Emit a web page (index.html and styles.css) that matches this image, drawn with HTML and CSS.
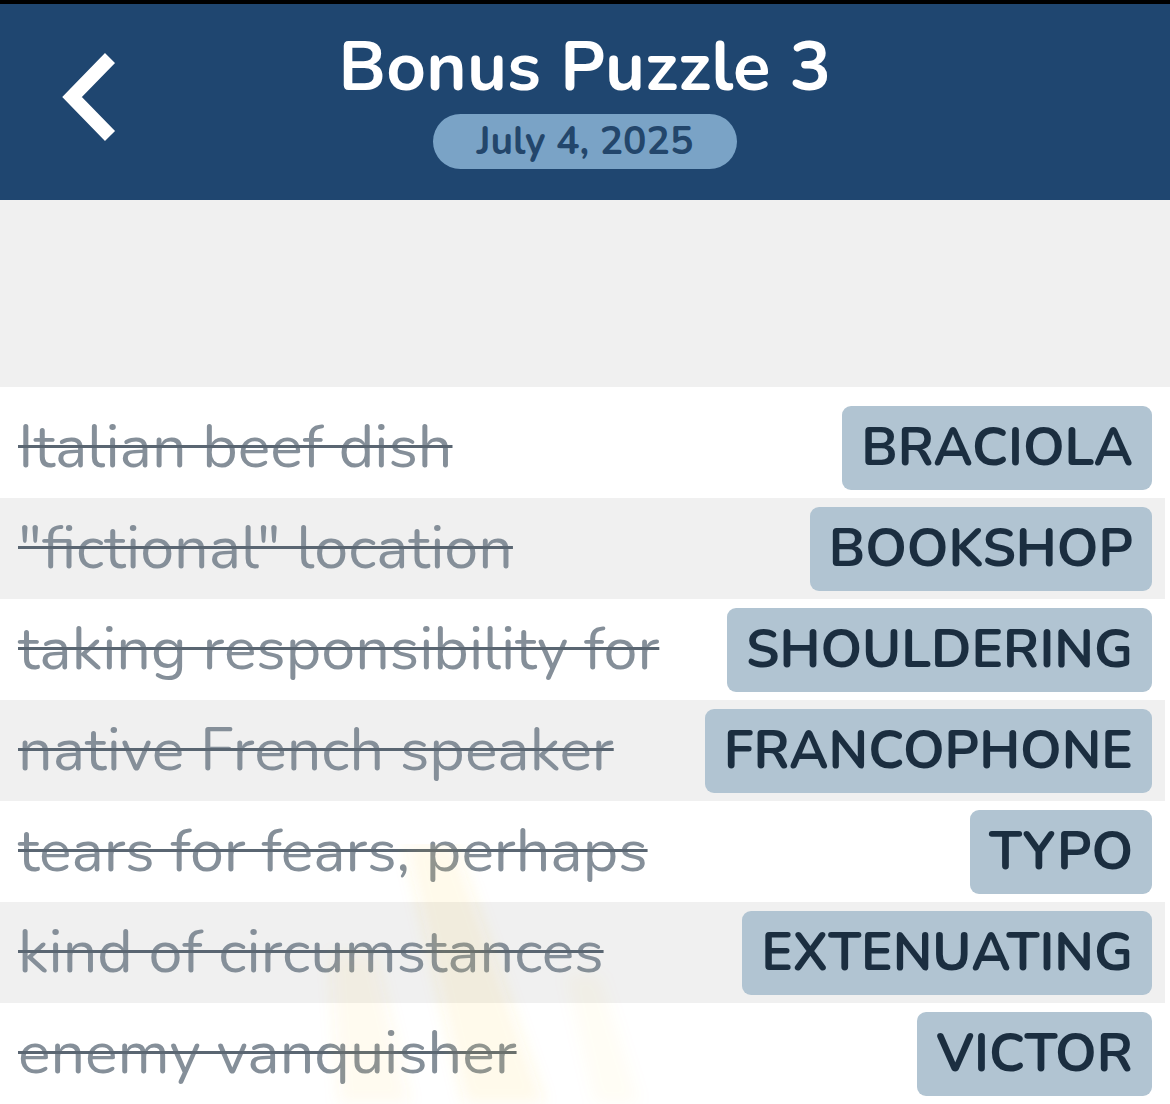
FILE: index.html
```html
<!DOCTYPE html>
<html lang="en">
<head>
<meta charset="utf-8">
<title>Bonus Puzzle 3</title>
<link rel="stylesheet" href="styles.css">
</head>
<body>
<div class="app">
  <header class="header">
    <div class="back">
      <svg class="back-icon" width="64" height="94" viewBox="0 0 64 94">
        <polyline points="52,8 14,47 52,86" fill="none" stroke="#ffffff" stroke-width="14" stroke-linejoin="miter"/>
      </svg>
    </div>
    <div class="title-block">
      <h1 class="title">Bonus Puzzle 3</h1>
      <div class="date">July 4, 2025</div>
    </div>
    <div class="spacer"></div>
  </header>
  <div class="blank"></div>
  <main class="list">
    <div class="row"><span class="clue">Italian beef dish</span><span class="tag">BRACIOLA</span></div>
    <div class="row"><span class="clue">"fictional" location</span><span class="tag">BOOKSHOP</span></div>
    <div class="row"><span class="clue">taking responsibility for</span><span class="tag">SHOULDERING</span></div>
    <div class="row"><span class="clue">native French speaker</span><span class="tag">FRANCOPHONE</span></div>
    <div class="row"><span class="clue">tears for fears, perhaps</span><span class="tag">TYPO</span></div>
    <div class="row"><span class="clue">kind of circumstances</span><span class="tag">EXTENUATING</span></div>
    <div class="row"><span class="clue">enemy vanquisher</span><span class="tag">VICTOR</span></div>
    <svg class="rays" width="1170" height="260" viewBox="0 0 1170 260">
      <defs>
        <filter id="soft" x="-50%" y="-50%" width="200%" height="200%">
          <feGaussianBlur stdDeviation="8"/>
        </filter>
      </defs>
      <g filter="url(#soft)">
        <polygon points="405,0 455,0 545,260 465,260" fill="#ffcf3a" opacity="0.10"/>
        <polygon points="330,110 375,110 410,260 340,260" fill="#ffcf3a" opacity="0.08"/>
        <polygon points="565,130 600,130 640,260 595,260" fill="#ffcf3a" opacity="0.04"/>
      </g>
    </svg>
  </main>
</div>
</body>
</html>
```

FILE: styles.css
```css
* { box-sizing: border-box; }
html, body { margin: 0; padding: 0; background: #ffffff; }
body {
  width: 1170px;
  height: 1104px;
  overflow: hidden;
  font-family: "Nunito", "Lato", "Open Sans", sans-serif;
}
.app { display: flex; flex-direction: column; }
.header {
  height: 200px;
  border-top: 4px solid #000000;
  background: #1f4670;
  display: grid;
  grid-template-columns: 1fr auto 1fr;
  align-items: start;
}
.back { padding: 46px 0 0 58px; }
.back-icon { display: block; }
.title-block {
  display: flex;
  flex-direction: column;
  align-items: center;
  padding-top: 23px;
}
.title {
  margin: 0;
  color: #ffffff;
  font-size: 69px;
  font-weight: 700;
  line-height: 80px;
  letter-spacing: 0.3px;
}
.date {
  margin-top: 7px;
  height: 55px;
  width: 304px;
  border-radius: 28px;
  background: #7aa3c6;
  color: #23466b;
  font-size: 39px;
  font-weight: 700;
  line-height: 55px;
  text-align: center;
}
.blank { height: 187px; background: #f0f0f0; }
.list {
  position: relative;
  padding-top: 10px;
  background: #ffffff;
}
.row {
  height: 101px;
  margin-right: 5px;
  padding: 0 13px 0 18px;
  display: flex;
  align-items: center;
  justify-content: space-between;
}
.row:nth-child(even) { background: #f0f0f0; }
.clue {
  color: #858f99;
  font-size: 61px;
  line-height: 1;
  text-decoration: line-through;
  text-decoration-color: #5a6672;
  text-decoration-thickness: 3px;
  white-space: nowrap;
}
.tag {
  height: 84px;
  padding: 0 19px;
  border-radius: 9px;
  background: #b1c4d2;
  color: #1b2e40;
  font-size: 53px;
  font-weight: 700;
  line-height: 84px;
  white-space: nowrap;
}
.rays {
  position: absolute;
  left: 0;
  bottom: 0;
  pointer-events: none;
}
```
